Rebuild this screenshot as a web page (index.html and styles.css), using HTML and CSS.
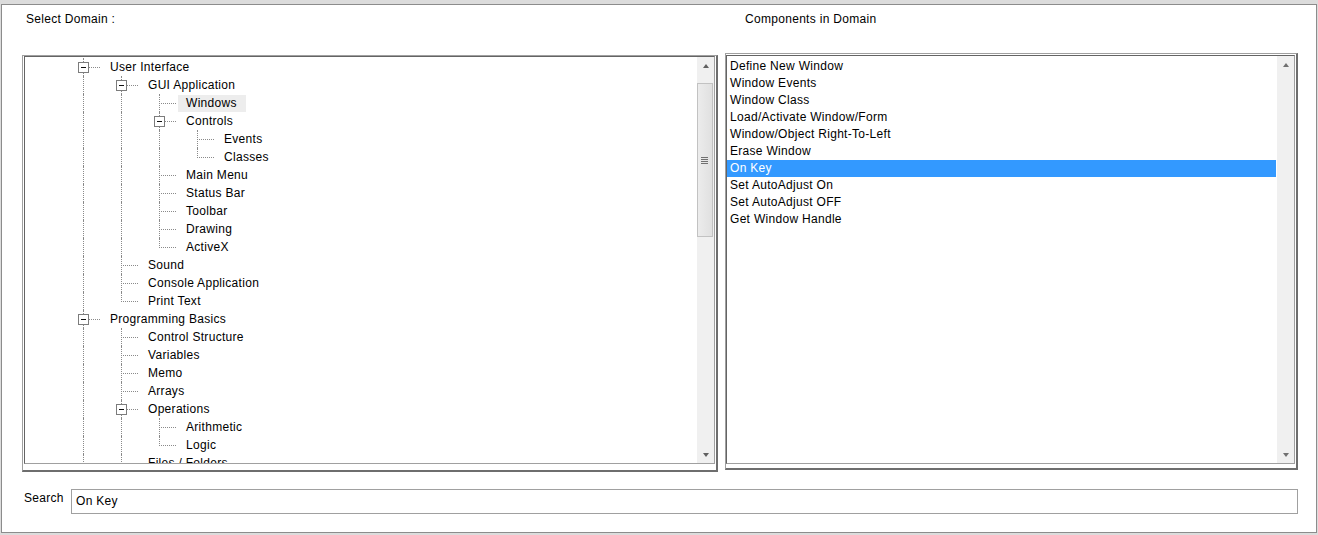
FILE: index.html
```html
<!DOCTYPE html>
<html>
<head>
<meta charset="utf-8">
<link rel="stylesheet" href="styles.css">
</head>
<body>
<div class="frame">
  <div class="win">
    <div class="head">
      <div class="hl">Select Domain :</div>
      <div class="hr">Components in Domain</div>
    </div>
    <div class="panels">
      <div class="pane pane-left">
        <div class="inset">
          <div class="tree">
            <div class="row"><span class="g t"><i class="box"></i></span><span class="lbl">User Interface</span></div>
            <div class="row"><span class="g v"></span><span class="g t"><i class="box"></i></span><span class="lbl">GUI Application</span></div>
            <div class="row"><span class="g v"></span><span class="g v"></span><span class="g t"></span><span class="lbl sel">Windows</span></div>
            <div class="row"><span class="g v"></span><span class="g v"></span><span class="g t"><i class="box"></i></span><span class="lbl">Controls</span></div>
            <div class="row"><span class="g v"></span><span class="g v"></span><span class="g v"></span><span class="g t"></span><span class="lbl">Events</span></div>
            <div class="row"><span class="g v"></span><span class="g v"></span><span class="g v"></span><span class="g l"></span><span class="lbl">Classes</span></div>
            <div class="row"><span class="g v"></span><span class="g v"></span><span class="g t"></span><span class="lbl">Main Menu</span></div>
            <div class="row"><span class="g v"></span><span class="g v"></span><span class="g t"></span><span class="lbl">Status Bar</span></div>
            <div class="row"><span class="g v"></span><span class="g v"></span><span class="g t"></span><span class="lbl">Toolbar</span></div>
            <div class="row"><span class="g v"></span><span class="g v"></span><span class="g t"></span><span class="lbl">Drawing</span></div>
            <div class="row"><span class="g v"></span><span class="g v"></span><span class="g l"></span><span class="lbl">ActiveX</span></div>
            <div class="row"><span class="g v"></span><span class="g t"></span><span class="lbl">Sound</span></div>
            <div class="row"><span class="g v"></span><span class="g t"></span><span class="lbl">Console Application</span></div>
            <div class="row"><span class="g v"></span><span class="g l"></span><span class="lbl">Print Text</span></div>
            <div class="row"><span class="g t"><i class="box"></i></span><span class="lbl">Programming Basics</span></div>
            <div class="row"><span class="g v"></span><span class="g t"></span><span class="lbl">Control Structure</span></div>
            <div class="row"><span class="g v"></span><span class="g t"></span><span class="lbl">Variables</span></div>
            <div class="row"><span class="g v"></span><span class="g t"></span><span class="lbl">Memo</span></div>
            <div class="row"><span class="g v"></span><span class="g t"></span><span class="lbl">Arrays</span></div>
            <div class="row"><span class="g v"></span><span class="g t"><i class="box"></i></span><span class="lbl">Operations</span></div>
            <div class="row"><span class="g v"></span><span class="g v"></span><span class="g t"></span><span class="lbl">Arithmetic</span></div>
            <div class="row"><span class="g v"></span><span class="g v"></span><span class="g l"></span><span class="lbl">Logic</span></div>
            <div class="row"><span class="g v"></span><span class="g t"></span><span class="lbl">Files / Folders</span></div>
          </div>
          <div class="sb">
            <div class="sb-btn"><span class="arr up"></span></div>
            <div class="sb-track"><div class="thumb"><span class="grip"></span></div></div>
            <div class="sb-btn"><span class="arr down"></span></div>
          </div>
        </div>
      </div>
      <div class="pane pane-right">
        <div class="inset">
          <div class="list">
            <div class="item">Define New Window</div>
            <div class="item">Window Events</div>
            <div class="item">Window Class</div>
            <div class="item">Load/Activate Window/Form</div>
            <div class="item">Window/Object Right-To-Left</div>
            <div class="item">Erase Window</div>
            <div class="item active">On Key</div>
            <div class="item">Set AutoAdjust On</div>
            <div class="item">Set AutoAdjust OFF</div>
            <div class="item">Get Window Handle</div>
          </div>
          <div class="sb">
            <div class="sb-btn"><span class="arr up dim"></span></div>
            <div class="sb-track"></div>
            <div class="sb-btn"><span class="arr down dim"></span></div>
          </div>
        </div>
      </div>
    </div>
    <div class="search">
      <div class="search-label">Search</div>
      <div class="input">On Key</div>
    </div>
  </div>
</div>
</body>
</html>
```

FILE: styles.css
```css
* { box-sizing: border-box; }
html, body { margin: 0; padding: 0; background: #fff; }
body {
  font-family: "Liberation Sans", Arial, sans-serif;
  font-size: 12px;
  letter-spacing: 0.3px;
  color: #000;
}
.frame {
  width: 1318px;
  height: 535px;
  background: #dcdcdc;
  padding: 4px 1px 2px 1px;
}
.win {
  height: 100%;
  border: 1px solid #8c8c8c;
  background: #fff;
  display: flex;
  flex-direction: column;
}
.head {
  display: grid;
  grid-template-columns: 696px 573px;
  column-gap: 7px;
  padding: 7px 0 0 20px;
  height: 48px;
  line-height: 14px;
}
.hl { padding-left: 4px; }
.hr { padding-left: 20px; }
.panels {
  display: grid;
  grid-template-columns: 696px 573px;
  column-gap: 7px;
  padding-left: 20px;
  align-items: start;
}
.pane {
  height: 417px;
  border-style: solid;
  border-width: 1px 2px 2px 1px;
  border-color: #a0a0a0 #6e6e6e #6e6e6e #a0a0a0;
  display: flex;
}
.pane-left { margin-top: 2px; padding: 0 1px 6px 1px; }
.pane-right { padding: 1px 1px 4px 0; }
.inset {
  flex: 1;
  display: flex;
  overflow: hidden;
  border-style: solid;
  border-width: 1px;
  border-color: #646464 #a0a0a0 #a0a0a0 #646464;
  background: #fff;
}
.tree {
  flex: 1;
  padding-left: 39px;
  padding-top: 1px;
  overflow: hidden;
}
.row {
  display: flex;
  height: 18px;
  line-height: 18px;
  white-space: nowrap;
}
.g {
  flex: none;
  width: 38px;
  height: 18px;
  position: relative;
}
.g.v::before, .g.t::before, .g.l::before {
  content: "";
  position: absolute;
  left: 19px;
  top: 0;
  bottom: 0;
  border-left: 1px dotted #8a8a8a;
}
.g.l::before { bottom: auto; height: 10px; }
.g.t::after, .g.l::after {
  content: "";
  position: absolute;
  left: 21px;
  top: 9px;
  width: 15px;
  border-top: 1px dotted #8a8a8a;
}
.box {
  position: absolute;
  left: 14px;
  top: 4px;
  width: 11px;
  height: 11px;
  border: 1px solid #7c7c7c;
  background: #fff;
  z-index: 1;
}
.box::before {
  content: "";
  position: absolute;
  left: 2px;
  top: 4px;
  width: 5px;
  height: 1px;
  background: #111;
}
.lbl {
  height: 17px;
  line-height: 17px;
  margin-top: 1px;
  padding: 0 9px 0 8px;
}
.lbl.sel { background: #ededed; }
.sb {
  flex: none;
  width: 17px;
  background: #f0f0f0;
  display: flex;
  flex-direction: column;
}
.sb-btn {
  height: 17px;
  display: flex;
  align-items: center;
  justify-content: center;
}
.sb-track { flex: 1; }
.arr { width: 0; height: 0; border-left: 3.5px solid transparent; border-right: 3.5px solid transparent; }
.arr.up { border-bottom: 4px solid #606060; }
.arr.down { border-top: 4px solid #606060; }
.arr.up.dim { border-bottom-color: #707070; }
.arr.down.dim { border-top-color: #707070; }
.thumb {
  margin: 9px 1px 0 0;
  height: 154px;
  border: 1px solid #c2c2c2;
  background: linear-gradient(to right, #ececec, #e0e0e0);
  display: flex;
  align-items: center;
  justify-content: center;
}
.grip {
  width: 7px;
  height: 7px;
  margin-left: -1px;
  background: repeating-linear-gradient(to bottom, #707070 0, #707070 1px, transparent 1px, transparent 2px);
}
.list {
  flex: 1;
  padding-top: 2px;
}
.item {
  height: 17px;
  line-height: 17px;
  padding-left: 3px;
  white-space: nowrap;
}
.item.active { background: #3399ff; color: #fff; margin-right: 1px; }
.search {
  display: flex;
  align-items: flex-start;
  margin-top: 17px;
  padding-left: 22px;
}
.search-label {
  width: 47px;
  line-height: 14px;
  margin-top: 2px;
}
.input {
  width: 1227px;
  height: 25px;
  border: 1px solid #a0a0a0;
  padding-left: 4px;
  line-height: 22px;
}
```
